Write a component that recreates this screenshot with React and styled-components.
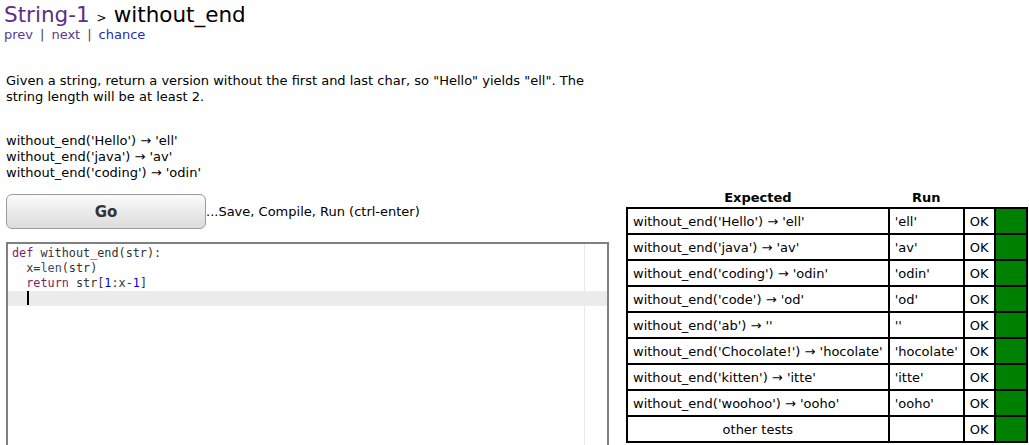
import React from "react";
import styled, { createGlobalStyle } from "styled-components";

const Global = createGlobalStyle`
  html, body { margin: 0; padding: 0; background: #fff; }
  body { font-family: "DejaVu Sans", Verdana, sans-serif; font-size: 13px; color: #000; overflow: hidden; }
`;

const Page = styled.div`
  padding: 0 0 0 4px;
`;

const TitleRow = styled.div`
  display: flex;
  align-items: baseline;
  gap: 7px;
  height: 25px;
  padding-top: 2px;
`;

const Crumb = styled.a`
  font-size: 21.5px;
  color: ${(p) => (p.$main ? "#000" : "#5c2e8a")};
  text-decoration: none;
`;

const Sep = styled.span`
  font-size: 12px;
  color: #000;
`;

const Links = styled.div`
  font-size: 13px;
  color: #555;
  height: 20px;
  line-height: 16px;
`;

const NavLink = styled.a`
  color: ${(p) => (p.$fresh ? "#2a2ab0" : "#553a8a")};
  text-decoration: none;
`;

const Pipe = styled.span`
  margin: 0 7px;
  color: #444;
`;

const Main = styled.div`
  display: flex;
  align-items: flex-start;
  margin-top: 20px;
`;

const Left = styled.div`
  width: 605px;
  padding-left: 2px;
  flex: none;
`;

const Desc = styled.p`
  margin: 6px 0 0 0;
  line-height: 16px;
  width: 600px;
`;

const Examples = styled.div`
  margin-top: 28px;
  line-height: 16px;
`;

const GoRow = styled.div`
  display: flex;
  align-items: center;
  margin-top: 13px;
`;

const GoButton = styled.button`
  width: 200px;
  height: 35px;
  border: 1px solid #9a9a9a;
  border-radius: 6px;
  background: linear-gradient(#fafafa, #dcdcdc);
  font-family: "DejaVu Sans", Verdana, sans-serif;
  font-weight: bold;
  font-size: 15px;
  color: #333;
  cursor: pointer;
`;

const Hint = styled.span`
  font-size: 13px;
`;

const Editor = styled.div`
  position: relative;
  margin-top: 13px;
  width: 599px;
  height: 220px;
  border: 2px solid #808080;
  border-bottom: none;
  font-family: "DejaVu Sans Mono", "Liberation Mono", monospace;
  font-size: 11.8px;
  line-height: 15px;
  padding-top: 2px;
  overflow: hidden;
`;

const PrintMargin = styled.div`
  position: absolute;
  top: 0;
  bottom: 0;
  left: 576px;
  width: 1px;
  background: #e8e8e8;
`;

const Line = styled.div`
  position: relative;
  height: 15px;
  padding-left: 4px;
  white-space: pre;
  color: #333;
  background: ${(p) => (p.$active ? "#ececec" : "transparent")};
`;

const Kw = styled.span`
  color: #7b2466;
`;
const Fn = styled.span`
  color: #3c4c72;
`;
const Num = styled.span`
  color: #0000cd;
`;

const Cursor = styled.span`
  display: inline-block;
  width: 2px;
  height: 14px;
  background: #000;
  vertical-align: top;
  margin-left: 1px;
`;

const Right = styled.div`
  margin-left: 15px;
  margin-top: 122px;
`;

const Results = styled.table`
  border-collapse: collapse;
  font-size: 13px;
`;

const Th = styled.th`
  font-weight: bold;
  padding: 0 0 1px 0;
  height: 17px;
  text-align: center;
`;

const Td = styled.td`
  border: 2px solid #000;
  height: 24px;
  padding: 0 5px;
  white-space: nowrap;
  text-align: ${(p) => (p.$center ? "center" : "left")};
  background: ${(p) => (p.$ok ? "#008000" : "#fff")};
  width: ${(p) => p.$w || "auto"};
`;

const rows = [
  ["without_end('Hello') \u2192 'ell'", "'ell'"],
  ["without_end('java') \u2192 'av'", "'av'"],
  ["without_end('coding') \u2192 'odin'", "'odin'"],
  ["without_end('code') \u2192 'od'", "'od'"],
  ["without_end('ab') \u2192 ''", "''"],
  ["without_end('Chocolate!') \u2192 'hocolate'", "'hocolate'"],
  ["without_end('kitten') \u2192 'itte'", "'itte'"],
  ["without_end('woohoo') \u2192 'ooho'", "'ooho'"],
];

export default function App() {
  return (
    <Page>
      <Global />
      <TitleRow>
        <Crumb href="#">String-1</Crumb>
        <Sep>&gt;</Sep>
        <Crumb $main>without_end</Crumb>
      </TitleRow>
      <Links>
        <NavLink href="#">prev</NavLink>
        <Pipe>|</Pipe>
        <NavLink href="#">next</NavLink>
        <Pipe>|</Pipe>
        <NavLink href="#" $fresh>chance</NavLink>
      </Links>
      <Main>
        <Left>
          <Desc>
            Given a string, return a version without the first and last char, so "Hello" yields "ell". The string length will be at least 2.
          </Desc>
          <Examples>
            <div>without_end('Hello') → 'ell'</div>
            <div>without_end('java') → 'av'</div>
            <div>without_end('coding') → 'odin'</div>
          </Examples>
          <GoRow>
            <GoButton>Go</GoButton>
            <Hint>...Save, Compile, Run (ctrl-enter)</Hint>
          </GoRow>
          <Editor>
            <PrintMargin />
            <Line><Kw>def</Kw> without_end(str):</Line>
            <Line>  x=<Fn>len</Fn>(str)</Line>
            <Line>  <Kw>return</Kw> str[<Num>1</Num>:x-<Num>1</Num>]</Line>
            <Line $active>  <Cursor /></Line>
          </Editor>
        </Left>
        <Right>
          <Results>
            <thead>
              <tr>
                <Th>Expected</Th>
                <Th>Run</Th>
                <Th></Th>
                <Th></Th>
              </tr>
            </thead>
            <tbody>
              {rows.map(([exp, run]) => (
                <tr key={exp}>
                  <Td>{exp}</Td>
                  <Td>{run}</Td>
                  <Td>OK</Td>
                  <Td $ok $w="20px"></Td>
                </tr>
              ))}
              <tr>
                <Td $center>other tests</Td>
                <Td></Td>
                <Td>OK</Td>
                <Td $ok $w="20px"></Td>
              </tr>
            </tbody>
          </Results>
        </Right>
      </Main>
    </Page>
  );
}
